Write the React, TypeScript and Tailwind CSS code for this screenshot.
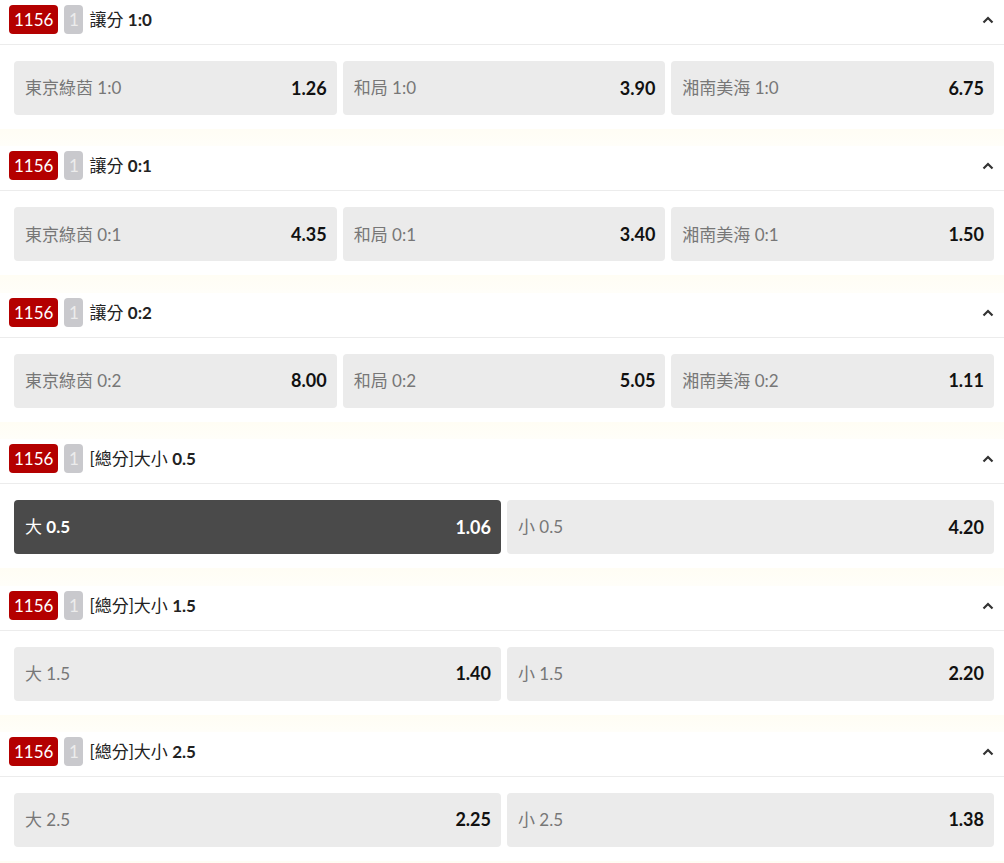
import React from 'react';

type Opt = { label: string; line: string; odds: string; active?: boolean };
type Market = { title: string; line: string; options: Opt[] };

const markets: Market[] = [
  {
    title: '讓分',
    line: '1:0',
    options: [
      { label: '東京綠茵', line: '1:0', odds: '1.26' },
      { label: '和局', line: '1:0', odds: '3.90' },
      { label: '湘南美海', line: '1:0', odds: '6.75' },
    ],
  },
  {
    title: '讓分',
    line: '0:1',
    options: [
      { label: '東京綠茵', line: '0:1', odds: '4.35' },
      { label: '和局', line: '0:1', odds: '3.40' },
      { label: '湘南美海', line: '0:1', odds: '1.50' },
    ],
  },
  {
    title: '讓分',
    line: '0:2',
    options: [
      { label: '東京綠茵', line: '0:2', odds: '8.00' },
      { label: '和局', line: '0:2', odds: '5.05' },
      { label: '湘南美海', line: '0:2', odds: '1.11' },
    ],
  },
  {
    title: '[總分]大小',
    line: '0.5',
    options: [
      { label: '大', line: '0.5', odds: '1.06', active: true },
      { label: '小', line: '0.5', odds: '4.20' },
    ],
  },
  {
    title: '[總分]大小',
    line: '1.5',
    options: [
      { label: '大', line: '1.5', odds: '1.40' },
      { label: '小', line: '1.5', odds: '2.20' },
    ],
  },
  {
    title: '[總分]大小',
    line: '2.5',
    options: [
      { label: '大', line: '2.5', odds: '2.25' },
      { label: '小', line: '2.5', odds: '1.38' },
    ],
  },
];

export default function App() {
  return (
    <div
      className="bg-white w-[1004px] h-[863px] overflow-hidden"
      style={{ fontFamily: 'Lato, "Noto Sans CJK TC", sans-serif' }}
    >
      {markets.map((m, i) => (
        <section key={i}>
          {/* header */}
          <div className="h-[45px] border-b border-[#ececec] flex items-start pt-[5px] pl-[9px] pr-[10px]">
            <span className="h-[29px] px-[5px] rounded-[4px] bg-[#b40000] text-white text-[17px] leading-[29px]">
              1156
            </span>
            <span className="ml-[6px] h-[29px] w-[19px] rounded-[4px] bg-[#c9c9cd] text-[#ececec] text-[17px] leading-[29px] text-center">
              1
            </span>
            <span className="ml-[6px] text-[17px] leading-[29px] text-[#222]">
              {m.title} <span className="font-bold">{m.line}</span>
            </span>
            <div className="flex-1" />
            <svg width="12" height="8" viewBox="0 0 12 8" className="mt-[11px]">
              <path d="M1.5 6.5 L6 2 L10.5 6.5" fill="none" stroke="#333" strokeWidth="2.2" />
            </svg>
          </div>

          {/* options */}
          <div className="pt-[16px] pb-[14px] pl-[14px] pr-[10px] flex gap-[6px]">
            {m.options.map((o, j) => (
              <button
                key={j}
                className={`flex-1 h-[54px] rounded-[4px] flex items-center justify-between pl-[11px] pr-[10px] text-[17px] ${
                  o.active ? 'bg-[#4a4a4a]' : 'bg-[#ebebeb]'
                }`}
              >
                <span className={o.active ? 'text-white' : 'text-[#777]'}>
                  {o.label} <span className={o.active ? 'font-bold' : ''}>{o.line}</span>
                </span>
                <span className={`font-bold text-[18px] ${o.active ? 'text-white' : 'text-[#111]'}`}>{o.odds}</span>
              </button>
            ))}
          </div>

          {/* spacer band */}
          <div className="h-[17.4px] bg-gradient-to-b from-[#fffdf4] to-[#fffef9]" />
        </section>
      ))}
    </div>
  );
}
